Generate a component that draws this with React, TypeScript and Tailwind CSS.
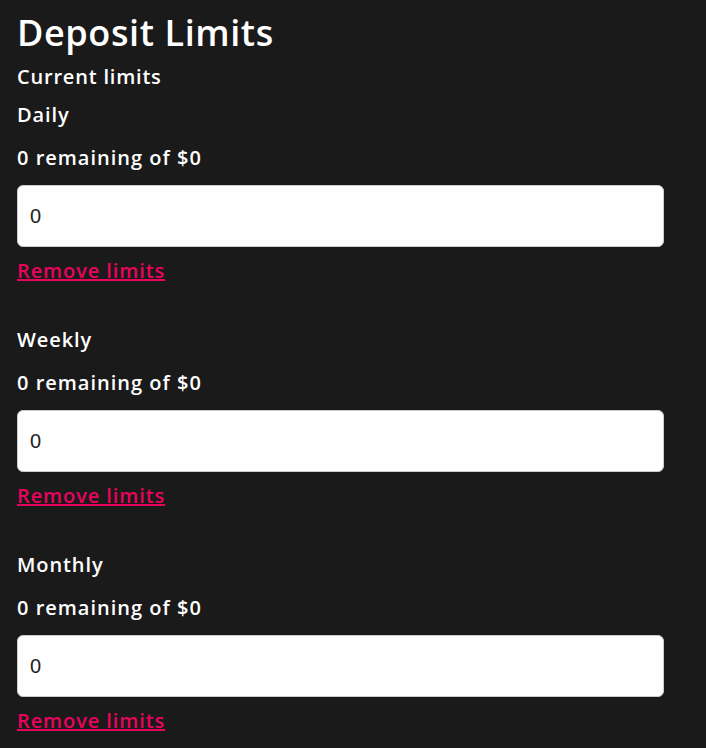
import React from 'react';

const LIMITS = ['Daily', 'Weekly', 'Monthly'];

const LimitBlock: React.FC<{ label: string }> = ({ label }) => {
  return (
    <div className="flex flex-col">
      <p className="text-[20px] leading-[26px] tracking-[0.9px] font-[540] text-white">{label}</p>
      <p className="mt-[17px] text-[20px] leading-[26px] tracking-[1px] font-[540] text-white">0 remaining of $0</p>
      <input
        readOnly
        value="0"
        className="mt-[14px] h-[62px] w-[647px] rounded-[6px] border border-[#ccc] bg-white px-[12px] text-[20px] text-[#222] outline-none font-['Liberation_Sans',Arial,sans-serif]"
      />
      <a href="#" className="mt-[11px] self-start text-[20px] leading-[26px] tracking-[0.9px] font-[540] text-[#e8035d] underline">
        Remove limits
      </a>
    </div>
  );
};

const App: React.FC = () => {
  return (
    <div className="min-h-screen w-full bg-[#1a1a1a] px-[17px] pt-[12px] font-['Open_Sans',sans-serif]">
      <h1 className="text-[36px] leading-[42px] tracking-[0.6px] font-semibold text-white">Deposit Limits</h1>
      <p className="mt-[10px] text-[20px] leading-[26px] tracking-[0.8px] font-[540] text-white">Current limits</p>
      <div className="mt-[12px] flex flex-col gap-[43px]">
        {LIMITS.map((l) => (
          <LimitBlock key={l} label={l} />
        ))}
      </div>
    </div>
  );
};

export default App;
